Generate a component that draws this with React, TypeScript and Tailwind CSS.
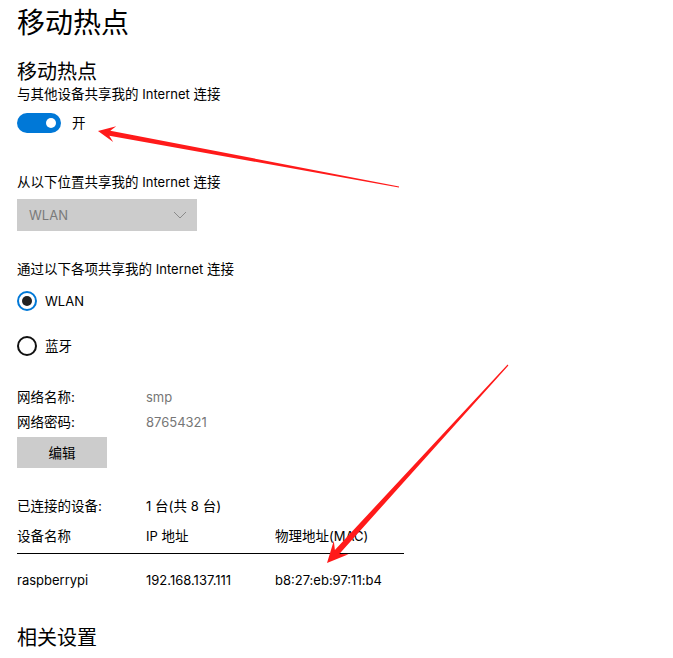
import React from "react";

type P = [number, number];

function arrowPolygon(tail: P, tip: P, headLen: number, headHalf: number, shaftHead: number, shaftTail: number, notch: number): string {
  const dx = tip[0] - tail[0];
  const dy = tip[1] - tail[1];
  const len = Math.hypot(dx, dy);
  const ux = dx / len;
  const uy = dy / len;
  const nx = -uy;
  const ny = ux;
  const at = (d: number, w: number): P => [tip[0] - ux * d + nx * w, tip[1] - uy * d + ny * w];
  const pts: P[] = [
    tip,
    at(headLen, headHalf),
    at(headLen - notch, shaftHead / 2),
    at(len, shaftTail / 2),
    at(len, -shaftTail / 2),
    at(headLen - notch, -shaftHead / 2),
    at(headLen, -headHalf),
  ];
  return pts.map((p) => `${p[0].toFixed(1)},${p[1].toFixed(1)}`).join(" ");
}

function L({ children }: { children: React.ReactNode }) {
  return <span className="text-[13px]">{children}</span>;
}

function Radio({ checked, children }: { checked: boolean; children: React.ReactNode }) {
  return (
    <div className="flex items-center h-5">
      {checked ? (
        <div className="w-5 h-5 rounded-full border-2 border-[#0078d7] flex items-center justify-center">
          <div className="w-[10px] h-[10px] rounded-full bg-[#222]" />
        </div>
      ) : (
        <div className="w-5 h-5 rounded-full border-2 border-[#111]" />
      )}
      <span className="ml-[8px] text-[13.5px] leading-5 text-black">{children}</span>
    </div>
  );
}

export default function App() {
  return (
    <div className="relative w-[673px] h-[658px] bg-white overflow-hidden font-[family-name:Inter,'Noto_Sans_CJK_SC',sans-serif]">
      <div className="pl-[17px] text-black">
        <div className="h-[46px] flex items-center text-[28px] leading-[46px] font-normal">移动热点</div>
        <div className="mt-[16px] h-5 text-[20px] leading-5">移动热点</div>
        <div className="mt-[2px] h-5 text-[13.5px] leading-5">
          与其他设备共享我的 <L>Internet</L> 连接
        </div>
        <div className="mt-[9px] h-5 flex items-center">
          <div className="w-[44px] h-5 rounded-full bg-[#0078d7] flex items-center justify-end pr-[5px]">
            <div className="w-[10px] h-[10px] rounded-full bg-white" />
          </div>
          <span className="ml-[11px] text-[13.5px] leading-5">开</span>
        </div>
        <div className="mt-[39px] h-5 text-[13.5px] leading-5">
          从以下位置共享我的 <L>Internet</L> 连接
        </div>
        <div className="mt-[7px] w-[180px] h-[32px] bg-[#cccccc] flex items-center justify-between pl-[12px] pr-[10px]">
          <span className="text-[13px] leading-5 text-[#7a7a7a]">WLAN</span>
          <svg width="14" height="8" viewBox="0 0 14 8">
            <polyline points="1,1 7,7 13,1" fill="none" stroke="#8a8a8a" strokeWidth="1" />
          </svg>
        </div>
        <div className="mt-[28px] h-5 text-[13.5px] leading-5">
          通过以下各项共享我的 <L>Internet</L> 连接
        </div>
        <div className="mt-[12px]">
          <Radio checked>
            <L>WLAN</L>
          </Radio>
        </div>
        <div className="mt-[25px]">
          <Radio checked={false}>蓝牙</Radio>
        </div>
        <div className="mt-[31px] h-5 flex text-[13.5px] leading-5">
          <span className="w-[129px]">网络名称:</span>
          <span className="text-[#767676] text-[13px]">smp</span>
        </div>
        <div className="mt-[5px] h-5 flex text-[13.5px] leading-5">
          <span className="w-[129px]">网络密码:</span>
          <span className="text-[#767676] text-[13px]">87654321</span>
        </div>
        <div className="mt-[5px] w-[90px] h-[31px] bg-[#cccccc] flex items-center justify-center text-[13.5px] leading-5">编辑</div>
        <div className="mt-[28px] h-5 flex text-[13.5px] leading-5">
          <span className="w-[129px]">已连接的设备:</span>
          <span>
            <L>1</L> 台(共 <L>8</L> 台)
          </span>
        </div>
        <div className="mt-[10px] h-5 flex text-[13.5px] leading-5">
          <span className="w-[129px]">设备名称</span>
          <span className="w-[129px]">
            <L>IP</L> 地址
          </span>
          <span>
            物理地址<L>(MAC)</L>
          </span>
        </div>
        <div className="mt-[7px] w-[387px] h-px bg-black" />
        <div className="mt-[16px] h-5 flex text-[13px] leading-5">
          <span className="w-[129px]">raspberrypi</span>
          <span className="w-[129px]">192.168.137.111</span>
          <span>b8:27:eb:97:11:b4</span>
        </div>
        <div className="mt-[38px] h-5 text-[20px] leading-5">相关设置</div>
      </div>
      <svg className="absolute left-0 top-0 pointer-events-none" width="673" height="658" viewBox="0 0 673 658">
        <polygon points={arrowPolygon([399, 187], [98, 131], 17, 8, 5, 1, 5)} fill="#ff1a1a" />
        <polygon points={arrowPolygon([508, 365], [327, 563], 21, 10, 6, 1.2, 6)} fill="#ff1a1a" />
      </svg>
    </div>
  );
}
